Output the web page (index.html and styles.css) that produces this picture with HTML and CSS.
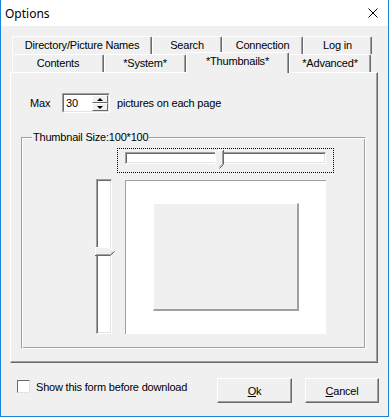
FILE: index.html
```html
<!DOCTYPE html>
<html lang="en">
<head>
  <meta charset="UTF-8">
  <link rel="stylesheet" href="styles.css">
  <title>Options</title>
</head>
<body>
  <div class="window">
    <div class="titlebar">
      <span class="title">Options</span>
      <svg class="close" width="10" height="10" viewBox="0 0 10 10">
        <path d="M0.5 0.5 L9.5 9.5 M9.5 0.5 L0.5 9.5" stroke="#000" stroke-width="1" fill="none"/>
      </svg>
    </div>
    <div class="client">
      <div class="tabs">
        <div class="tab-row">
          <div class="tab" style="width: 140px">Directory/Picture Names</div>
          <div class="tab" style="width: 70px">Search</div>
          <div class="tab" style="width: 81px">Connection</div>
          <div class="tab" style="width: 69px">Log in</div>
        </div>
        <div class="tab-row">
          <div class="tab" style="width: 92px">Contents</div>
          <div class="tab" style="width: 82px">*System*</div>
          <div class="tab active" style="width: 103px">*Thumbnails*</div>
          <div class="tab" style="width: 82px">*Advanced*</div>
        </div>
      </div>
      <div class="page">
        <div class="max-row">
          <span class="max-label">Max</span>
          <div class="spin">
            <div class="spin-inner">
              <span class="spin-value">30</span>
              <div class="spin-buttons">
                <div class="spin-btn"><span class="arrow-up"></span></div>
                <div class="spin-btn"><span class="arrow-down"></span></div>
              </div>
            </div>
          </div>
          <span class="max-text">pictures on each page</span>
        </div>
        <div class="group">
          <span class="group-title">Thumbnail Size:100*100</span>
          <div class="focus">
            <div class="htrack"></div>
            <svg class="hthumb" width="9" height="19" viewBox="0 0 9 19">
              <path d="M0 0 H8 V14 L4 18 L0 14 Z" fill="#f0f0f0"/>
              <path d="M0.5 14 V0.5 H7.5" stroke="#fff" fill="none"/>
              <path d="M8.5 0 V14.5 L4.5 18.5" stroke="#696969" fill="none"/>
              <path d="M7.5 1 V14 L4 17.5" stroke="#a0a0a0" fill="none"/>
            </svg>
          </div>
          <div class="preview-row">
            <div class="vtrack">
              <svg class="vthumb" width="20" height="9" viewBox="0 0 20 9">
                <path d="M0 0 H15 L19 4 L15 8 H0 Z" fill="#f0f0f0"/>
                <path d="M0.5 8 V0.5 H15 L18.5 4" stroke="#fff" fill="none"/>
                <path d="M0 8.5 H15.5 L19.5 4.5" stroke="#696969" fill="none"/>
                <path d="M1 7.5 H15 L18 4.5" stroke="#a0a0a0" fill="none"/>
              </svg>
            </div>
            <div class="preview">
              <div class="thumb-box"></div>
            </div>
          </div>
        </div>
      </div>
      <div class="footer">
        <label class="check">
          <span class="check-box"></span>
          <span class="check-text">Show this form before download</span>
        </label>
        <div class="buttons">
          <button class="btn" type="button"><u>O</u>k</button>
          <button class="btn btn-cancel" type="button"><u>C</u>ancel</button>
        </div>
      </div>
    </div>
  </div>
</body>
</html>
```

FILE: styles.css
```css
body {
  margin: 0;
  font-family: 'Liberation Sans', Arial, sans-serif;
  font-size: 11px;
  letter-spacing: -0.2px;
  color: #000;
  background: #fff;
}
.window {
  width: 389px;
  height: 417px;
  box-sizing: border-box;
  border: 1px solid #1883d7;
  border-top: none;
  background: #f0f0f0;
  display: flex;
  flex-direction: column;
}
.titlebar {
  height: 26px;
  flex-shrink: 0;
  background: #fff;
  display: flex;
  align-items: center;
  padding-left: 4px;
}
.title {
  font-family: 'Noto Sans', sans-serif;
  font-size: 12px;
  letter-spacing: 0;
}
.close {
  margin-left: auto;
  margin-right: 10px;
}
.client {
  flex: 1;
  padding-top: 10px;
  display: flex;
  flex-direction: column;
}
.tabs {
  margin-left: 11px;
}
.tab-row {
  display: flex;
  align-items: flex-start;
  height: 18px;
}
.tab {
  box-sizing: border-box;
  height: 18px;
  border-top: 1px solid #fff;
  border-left: 1px solid #fff;
  border-right: 1px solid #696969;
  border-radius: 2px 2px 0 0;
  box-shadow: inset -1px 0 #a0a0a0;
  background: #f0f0f0;
  text-align: center;
  line-height: 16px;
  white-space: nowrap;
}
.tab.active {
  height: 21px;
  margin-top: -2px;
  margin-bottom: -1px;
  position: relative;
  z-index: 1;
}
.page {
  width: 368px;
  height: 291px;
  margin-left: 9px;
  box-sizing: border-box;
  border: 1px solid;
  border-color: #fff #696969 #696969 #fff;
  box-shadow: inset -1px -1px #a0a0a0;
  padding-top: 20px;
}
.max-row {
  display: flex;
  align-items: center;
  height: 20px;
  margin-left: 19px;
}
.max-label {
  width: 32px;
}
.spin {
  width: 48px;
  height: 20px;
  box-sizing: border-box;
  border: 1px solid;
  border-color: #a0a0a0 #fff #fff #a0a0a0;
  display: flex;
}
.spin-inner {
  flex: 1;
  display: flex;
  border: 1px solid;
  border-color: #696969 #e3e3e3 #e3e3e3 #696969;
  background: #fff;
}
.spin-value {
  flex: 1;
  padding-left: 2px;
  line-height: 16px;
}
.spin-buttons {
  width: 16px;
  display: flex;
  flex-direction: column;
}
.spin-btn {
  flex: 1;
  box-sizing: border-box;
  border: 1px solid;
  border-color: #fff #696969 #696969 #fff;
  background: #f0f0f0;
  display: flex;
  align-items: center;
  justify-content: center;
}
.arrow-up {
  border-left: 3px solid transparent;
  border-right: 3px solid transparent;
  border-bottom: 3px solid #000;
}
.arrow-down {
  border-left: 3px solid transparent;
  border-right: 3px solid transparent;
  border-top: 3px solid #000;
}
.max-text {
  margin-left: 7px;
}
.group {
  position: relative;
  width: 345px;
  height: 212px;
  margin: 24px 0 0 10px;
  box-sizing: border-box;
  border: 1px solid;
  border-color: #a0a0a0 #fff #fff #a0a0a0;
  box-shadow: inset 1px 1px #fff, inset -1px -1px #a0a0a0;
}
.group-title {
  position: absolute;
  top: -7px;
  left: 10px;
  padding: 0 1px;
  line-height: 13px;
  background: #f0f0f0;
}
.focus {
  position: relative;
  width: 217px;
  height: 25px;
  margin: 10px 0 0 95px;
  box-sizing: border-box;
  border: 1px dotted #000;
  padding: 3px 0 0 7px;
}
.htrack {
  width: 201px;
  height: 12px;
  box-sizing: border-box;
  border: 1px solid;
  border-color: #a0a0a0 #fff #fff #a0a0a0;
  box-shadow: inset 1px 1px #696969, inset -1px -1px #e3e3e3;
  background: #fff;
}
.hthumb {
  position: absolute;
  left: 97px;
  top: 1px;
}
.preview-row {
  display: flex;
  align-items: flex-start;
  margin-top: 6px;
}
.vtrack {
  position: relative;
  width: 16px;
  height: 155px;
  margin-left: 74px;
  box-sizing: border-box;
  border: 1px solid;
  border-color: #a0a0a0 #fff #fff #a0a0a0;
  box-shadow: inset 1px 1px #696969, inset -1px -1px #e3e3e3;
  background: #fff;
}
.vthumb {
  position: absolute;
  left: -2px;
  top: 67px;
}
.preview {
  width: 201px;
  height: 154px;
  margin: 1px 0 0 13px;
  box-sizing: border-box;
  background: #fff;
  border-top: 1px solid #a0a0a0;
  border-left: 1px solid #a0a0a0;
  padding: 22px 0 0 27px;
}
.thumb-box {
  width: 146px;
  height: 108px;
  box-sizing: border-box;
  background: #f0f0f0;
  border-top: 1px solid #fff;
  border-left: 1px solid #fff;
  border-right: 2px solid #a0a0a0;
  border-bottom: 2px solid #a0a0a0;
}
.footer {
  display: flex;
  align-items: flex-start;
  padding: 15px 0 0 16px;
}
.check {
  display: flex;
  align-items: center;
  margin-top: 2px;
}
.check-box {
  width: 13px;
  height: 13px;
  box-sizing: border-box;
  border: 1px solid;
  border-color: #696969 #e3e3e3 #e3e3e3 #696969;
  background: #fff;
}
.check-text {
  margin-left: 6px;
}
.buttons {
  display: flex;
  gap: 13px;
  margin-left: auto;
  margin-right: 9px;
}
.btn {
  width: 75px;
  height: 25px;
  padding: 0;
  box-sizing: border-box;
  font-family: 'Liberation Sans', Arial, sans-serif;
  font-size: 11px;
  letter-spacing: -0.2px;
  color: #000;
  background: #f0f0f0;
  border: 1px solid;
  border-color: #fff #696969 #696969 #fff;
  box-shadow: inset -1px -1px #a0a0a0;
}
.btn-cancel {
  width: 74px;
}
```
